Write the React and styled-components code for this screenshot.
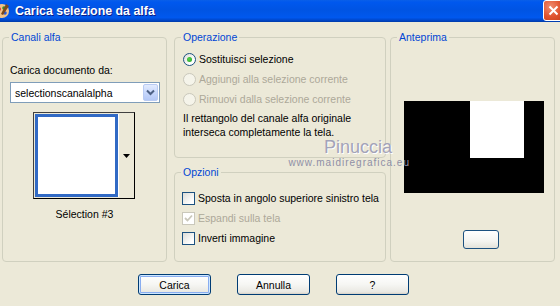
import React from "react";
import styled, { createGlobalStyle } from "styled-components";

const GlobalStyle = createGlobalStyle`
  html, body {
    margin: 0;
    padding: 0;
    background: #ece9d8;
    font-family: "Liberation Sans", Arial, sans-serif;
    font-size: 10.5px;
    color: #000;
  }
`;

const Window = styled.div`
  position: relative;
  width: 560px;
  height: 306px;
  overflow: hidden;
  background: #ece9d8;
`;

const TitleBar = styled.div`
  display: flex;
  align-items: center;
  height: 22px;
  background: linear-gradient(
    180deg,
    #0a5fe8 0%,
    #0058ee 10%,
    #0054e3 45%,
    #0058ee 80%,
    #0046c8 92%,
    #003ba8 100%
  );
`;

const AppIcon = styled.svg`
  width: 16px;
  height: 16px;
  margin-left: -6px;
  flex: none;
`;

const Title = styled.span`
  margin-left: 5px;
  font-family: "Liberation Sans", Arial, sans-serif;
  font-weight: bold;
  font-size: 12.4px;
  color: #fff;
  text-shadow: 1px 1px 0 #0a1e8a;
  flex: 1;
`;

const CloseButton = styled.div`
  width: 21px;
  height: 21px;
  margin-right: -4px;
  margin-top: -1px;
  box-sizing: border-box;
  border: 1px solid #fff;
  border-radius: 3px;
  background: radial-gradient(circle at 35% 30%, #f08d70 0%, #e0532f 55%, #c8401b 100%);
  display: flex;
  align-items: center;
  justify-content: center;
`;

const Body = styled.div`
  padding: 9px 0 0 2px;
`;

const Columns = styled.div`
  display: flex;
  gap: 4px;
`;

const Group = styled.fieldset`
  margin: 0;
  padding: 0;
  min-width: 0;
  box-sizing: border-box;
  width: ${(p) => p.$w}px;
  height: ${(p) => p.$h}px;
  border: 1px solid #d0d0bf;
  border-radius: 4px;
`;

const Legend = styled.legend`
  margin-left: 6px;
  padding: 0 2px;
  color: #0046d5;
  font-size: 10.5px;
  line-height: 13px;
`;

const GroupInner = styled.div`
  display: flex;
  flex-direction: column;
  align-items: flex-start;
  padding: ${(p) => p.$pad};
`;

const MiddleColumn = styled.div`
  display: flex;
  flex-direction: column;
  gap: 8px;
  margin-left: 3px;
`;

const Label = styled.div`
  line-height: 13px;
`;

const Combo = styled.div`
  margin-top: 5px;
  width: 150px;
  height: 21px;
  box-sizing: border-box;
  border: 1px solid #7f9db9;
  background: #fff;
  display: flex;
  align-items: center;
  padding: 1px;
`;

const ComboText = styled.span`
  flex: 1;
  padding-left: 3px;
`;

const ComboButton = styled.div`
  width: 15px;
  height: 17px;
  box-sizing: border-box;
  border: 1px solid #b9cbf3;
  border-radius: 2px;
  background: linear-gradient(180deg, #e3ebfe 0%, #c8d8fc 50%, #b4c8f6 100%);
  display: flex;
  align-items: center;
  justify-content: center;
`;

const SwatchFrame = styled.div`
  margin: 9px 0 0 23px;
  width: 102px;
  height: 87px;
  box-sizing: border-box;
  border: 1px solid #000;
  border-top-color: #404040;
  border-left-color: #404040;
  padding: 1px;
  display: flex;
  background: #ece9d8;
`;

const Swatch = styled.div`
  width: 83px;
  height: 83px;
  box-sizing: border-box;
  border: 3px solid #316ac5;
  background: #fff;
`;

const SwatchDrop = styled.div`
  flex: 1;
  border-left: 1px solid #fff;
  display: flex;
  align-items: center;
  justify-content: center;
`;

const Caption = styled.div`
  margin-top: 9px;
  align-self: stretch;
  padding-right: 7px;
  text-align: center;
  line-height: 13px;
`;

const OptionRow = styled.div`
  display: flex;
  align-items: center;
  height: ${(p) => p.$h || 20}px;
  gap: 3px;
  white-space: nowrap;
  color: ${(p) => (p.$disabled ? "#aca899" : "#000")};
`;

const Radio = styled.span`
  width: 13px;
  height: 13px;
  box-sizing: border-box;
  border-radius: 50%;
  border: 1px solid ${(p) => (p.$disabled ? "#cac8bb" : "#1c5180")};
  background: ${(p) =>
    p.$disabled ? "#f5f4ea" : "linear-gradient(135deg, #dcdcd7 0%, #fff 70%)"};
  display: flex;
  align-items: center;
  justify-content: center;
  flex: none;
  &::after {
    content: "";
    display: ${(p) => (p.$checked ? "block" : "none")};
    width: 5px;
    height: 5px;
    border-radius: 50%;
    background: radial-gradient(circle at 40% 40%, #55d34b, #21a121);
  }
`;

const Check = styled.span`
  width: 13px;
  height: 13px;
  box-sizing: border-box;
  border: 1px solid ${(p) => (p.$disabled ? "#cac8bb" : "#1c5180")};
  background: ${(p) =>
    p.$disabled ? "#fff" : "linear-gradient(135deg, #dcdcd7 0%, #fff 80%)"};
  display: flex;
  align-items: center;
  justify-content: center;
  flex: none;
`;

const Note = styled.p`
  margin: 2px 0 0 0;
  line-height: 14px;
`;

const Preview = styled.div`
  width: 140px;
  height: 92px;
  background: #000;
  display: flex;
  padding-left: 66px;
  box-sizing: border-box;
`;

const PreviewWhite = styled.div`
  width: 54px;
  height: 57px;
  background: #fff;
`;

const SmallButton = styled.div`
  margin: 37px 0 0 59px;
  width: 36px;
  height: 19px;
  box-sizing: border-box;
  border: 1px solid #1c5180;
  border-radius: 3px;
  background: linear-gradient(180deg, #fff 0%, #f4f4f0 60%, #e3e2da 100%);
`;

const ButtonRow = styled.div`
  display: flex;
  gap: 26px;
  padding: 12px 0 0 136px;
`;

const Button = styled.button`
  width: 73px;
  height: 21px;
  padding: 0;
  box-sizing: border-box;
  border: 1px solid #003c74;
  border-radius: 3px;
  background: linear-gradient(180deg, #fff 0%, #f6f6f3 50%, #e9e8e2 90%, #d6d0c5 100%);
  font-family: "Liberation Sans", Arial, sans-serif;
  font-size: 10.5px;
  color: #000;
  box-shadow: ${(p) =>
    p.$default ? "inset 0 0 0 1px #cee7ff, inset 0 0 0 2px #89adf0" : "none"};
`;

const Watermark = styled.div`
  position: absolute;
  left: 288px;
  top: 137px;
  display: flex;
  flex-direction: column;
  align-items: flex-end;
  width: 122px;
  pointer-events: none;
`;

const WaterName = styled.span`
  font-family: "Liberation Sans", Arial, sans-serif;
  font-size: 18px;
  line-height: 20px;
  color: #a3a3b8;
  margin-right: 18px;
  text-shadow: 1px 1px 0 #fff;
`;

const WaterSite = styled.span`
  font-family: "Liberation Sans", Arial, sans-serif;
  font-size: 10px;
  line-height: 11px;
  letter-spacing: 1px;
  color: #8f8fa6;
`;

function CheckMark({ color }) {
  return (
    <svg width="9" height="9" viewBox="0 0 9 9">
      <path d="M1 4 L3.5 6.5 L8 1.5" fill="none" stroke={color} strokeWidth="1.8" />
    </svg>
  );
}

export default function App() {
  return (
    <Window>
      <GlobalStyle />
      <TitleBar>
        <AppIcon viewBox="0 0 16 16">
          <circle cx="8" cy="8" r="7" fill="#f2c38a" />
          <circle cx="5" cy="6" r="2" fill="#e23b2e" />
          <circle cx="10" cy="5" r="1.8" fill="#3a8e2a" />
          <circle cx="11" cy="10" r="1.8" fill="#2a5bd7" />
          <path d="M12 1 L15 3 L9 12 L7 11 Z" fill="#7a4a1e" />
        </AppIcon>
        <Title>Carica selezione da alfa</Title>
        <CloseButton>
          <svg width="11" height="11" viewBox="0 0 11 11">
            <path d="M1.5 1.5 L9.5 9.5 M9.5 1.5 L1.5 9.5" stroke="#fff" strokeWidth="2" />
          </svg>
        </CloseButton>
      </TitleBar>

      <Body>
        <Columns>
          <Group $w={165} $h={231}>
            <Legend>Canali alfa</Legend>
            <GroupInner $pad="20px 0 0 7px">
              <Label>Carica documento da:</Label>
              <Combo>
                <ComboText>selectionscanalalpha</ComboText>
                <ComboButton>
                  <svg width="9" height="7" viewBox="0 0 9 7">
                    <path d="M1 1.5 L4.5 5 L8 1.5" fill="none" stroke="#4d6185" strokeWidth="2" />
                  </svg>
                </ComboButton>
              </Combo>
              <SwatchFrame>
                <Swatch />
                <SwatchDrop>
                  <svg width="7" height="4" viewBox="0 0 7 4">
                    <path d="M0 0 H7 L3.5 4 Z" fill="#000" />
                  </svg>
                </SwatchDrop>
              </SwatchFrame>
              <Caption>Sélection #3</Caption>
            </GroupInner>
          </Group>

          <MiddleColumn>
            <Group $w={212} $h={127}>
              <Legend>Operazione</Legend>
              <GroupInner $pad="5px 0 0 8px">
                <OptionRow>
                  <Radio $checked />
                  Sostituisci selezione
                </OptionRow>
                <OptionRow $disabled>
                  <Radio $disabled />
                  Aggiungi alla selezione corrente
                </OptionRow>
                <OptionRow $disabled>
                  <Radio $disabled />
                  Rimuovi dalla selezione corrente
                </OptionRow>
                <Note>
                  Il rettangolo del canale alfa originale
                  <br />
                  interseca completamente la tela.
                </Note>
              </GroupInner>
            </Group>
            <Group $w={212} $h={96}>
              <Legend>Opzioni</Legend>
              <GroupInner $pad="9px 0 0 7px">
                <OptionRow>
                  <Check />
                  Sposta in angolo superiore sinistro tela
                </OptionRow>
                <OptionRow $disabled>
                  <Check $disabled>
                    <CheckMark color="#cac8bb" />
                  </Check>
                  Espandi sulla tela
                </OptionRow>
                <OptionRow>
                  <Check />
                  Inverti immagine
                </OptionRow>
              </GroupInner>
            </Group>
          </MiddleColumn>

          <Group $w={165} $h={231}>
            <Legend>Anteprima</Legend>
            <GroupInner $pad="57px 0 0 13px">
              <Preview>
                <PreviewWhite />
              </Preview>
              <SmallButton />
            </GroupInner>
          </Group>
        </Columns>

        <ButtonRow>
          <Button $default>Carica</Button>
          <Button>Annulla</Button>
          <Button>?</Button>
        </ButtonRow>
      </Body>

      <Watermark>
        <WaterName>Pinuccia</WaterName>
        <WaterSite>www.maidiregrafica.eu</WaterSite>
      </Watermark>
    </Window>
  );
}
